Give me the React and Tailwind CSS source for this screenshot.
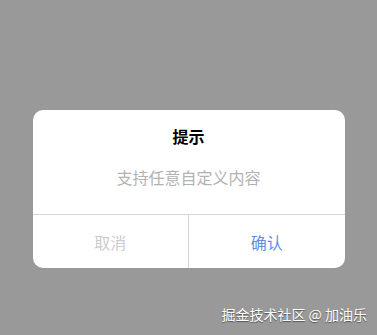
import React from "react";

const Dialog = ({ title, children, onCancel, onConfirm }) => {
  return (
    <div className="w-[312px] bg-white rounded-[10px] overflow-hidden">
      <div className="pt-[15px] pb-[26px] text-center">
        <h2 className="text-[16px] leading-[22px] font-bold text-black">{title}</h2>
        <div className="mt-[19px] text-[16px] leading-[22px] text-[#b2b2b2]">{children}</div>
      </div>
      <div className="flex border-t border-[#d5d5d5] h-[54px]">
        <button onClick={onCancel} className="flex-1 text-[16px] text-[#cccccc] border-r border-[#d5d5d5]">
          取消
        </button>
        <button onClick={onConfirm} className="flex-1 text-[16px] text-[#5c8fe0]">
          确认
        </button>
      </div>
    </div>
  );
};

export default function App() {
  return (
    <div
      className="relative h-[335px] w-full bg-[#999999] flex justify-center pt-[110px]"
      style={{ fontFamily: '"Noto Sans CJK SC", "Noto Sans", sans-serif' }}
    >
      <div>
        <Dialog title="提示">支持任意自定义内容</Dialog>
      </div>
      <div className="absolute right-[10px] bottom-[11px] text-[14px] leading-[20px] text-white [text-shadow:0_1px_1px_rgba(0,0,0,0.45)]">
        掘金技术社区 @ 加油乐
      </div>
    </div>
  );
}
